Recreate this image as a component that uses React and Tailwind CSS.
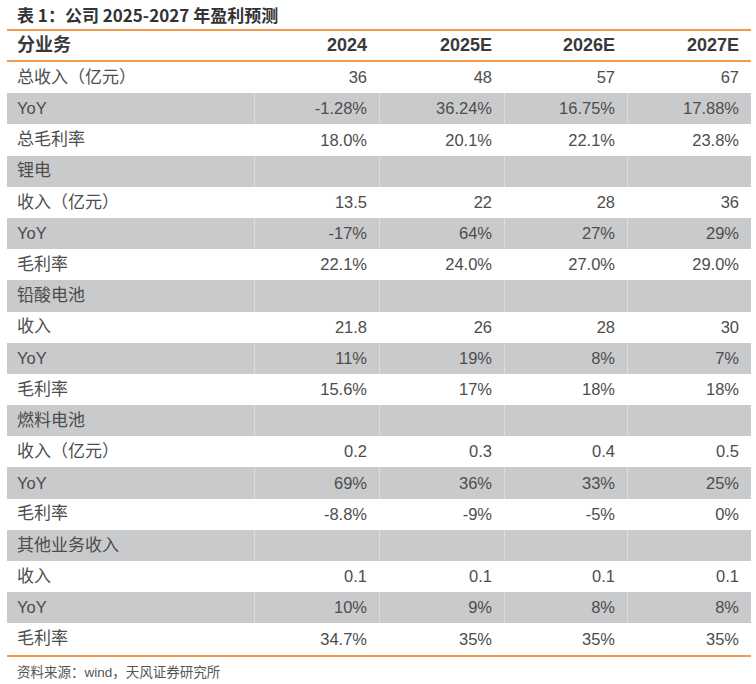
import React from 'react';

const rows = [
  { label: '总收入（亿元）', vals: ['36', '48', '57', '67'] },
  { label: 'YoY', vals: ['-1.28%', '36.24%', '16.75%', '17.88%'], gray: true },
  { label: '总毛利率', vals: ['18.0%', '20.1%', '22.1%', '23.8%'] },
  { label: '锂电', vals: ['', '', '', ''], gray: true },
  { label: '收入（亿元）', vals: ['13.5', '22', '28', '36'] },
  { label: 'YoY', vals: ['-17%', '64%', '27%', '29%'], gray: true },
  { label: '毛利率', vals: ['22.1%', '24.0%', '27.0%', '29.0%'] },
  { label: '铅酸电池', vals: ['', '', '', ''], gray: true },
  { label: '收入', vals: ['21.8', '26', '28', '30'] },
  { label: 'YoY', vals: ['11%', '19%', '8%', '7%'], gray: true },
  { label: '毛利率', vals: ['15.6%', '17%', '18%', '18%'] },
  { label: '燃料电池', vals: ['', '', '', ''], gray: true },
  { label: '收入（亿元）', vals: ['0.2', '0.3', '0.4', '0.5'] },
  { label: 'YoY', vals: ['69%', '36%', '33%', '25%'], gray: true },
  { label: '毛利率', vals: ['-8.8%', '-9%', '-5%', '0%'] },
  { label: '其他业务收入', vals: ['', '', '', ''], gray: true },
  { label: '收入', vals: ['0.1', '0.1', '0.1', '0.1'] },
  { label: 'YoY', vals: ['10%', '9%', '8%', '8%'], gray: true },
  { label: '毛利率', vals: ['34.7%', '35%', '35%', '35%'] },
];

const widths = ['w-[125px]', 'w-[125px]', 'w-[123px]', 'w-[124px]'];
const font = { fontFamily: '"Liberation Sans", "Noto Sans CJK SC", sans-serif' };
const cjk = { fontFamily: '"Noto Sans CJK SC", sans-serif' };

export default function App() {
  return (
    <div className="w-[756px] h-[684px] bg-white text-[#4d4d4d]" style={font}>
      <div className="h-[29px] pl-[17px] flex items-center text-[17px] font-bold text-[#333]" style={cjk}>
        表 1：公司 2025-2027 年盈利预测
      </div>

      <div className="ml-[7px] w-[744px]">
        <div className="flex h-[33px] border-y-2 border-[#f39a4c] items-center text-[18px] font-bold text-[#3a3a3a]">
          <div className="w-[247px] pl-[10px]">分业务</div>
          {['2024', '2025E', '2026E', '2027E'].map((y, i) => (
            <div key={y} className={`${widths[i]} pr-[12px] text-right`}>{y}</div>
          ))}
        </div>

        {rows.map((r, idx) => (
          <div
            key={idx}
            className={`flex h-[31.2px] items-center text-[16.5px] ${r.gray ? 'bg-[#c9cacc]' : 'bg-white'}`}
          >
            <div className={`w-[247px] pl-[10px] h-full flex items-center ${r.label === 'YoY' ? 'text-[16.5px]' : 'text-[17px]'}`}>{r.label}</div>
            {r.vals.map((v, i) => (
              <div
                key={i}
                className={`${widths[i]} h-full pr-[12px] flex items-center justify-end border-l ${r.gray ? 'border-[#dcdddf]' : 'border-white'}`}
              >
                {v}
              </div>
            ))}
          </div>
        ))}

        <div className="h-[2px] bg-[#f39a4c]" />
      </div>

      <div className="pl-[17px] pt-[6px] text-[13.5px] text-[#555]">资料来源：wind，天风证券研究所</div>
    </div>
  );
}
